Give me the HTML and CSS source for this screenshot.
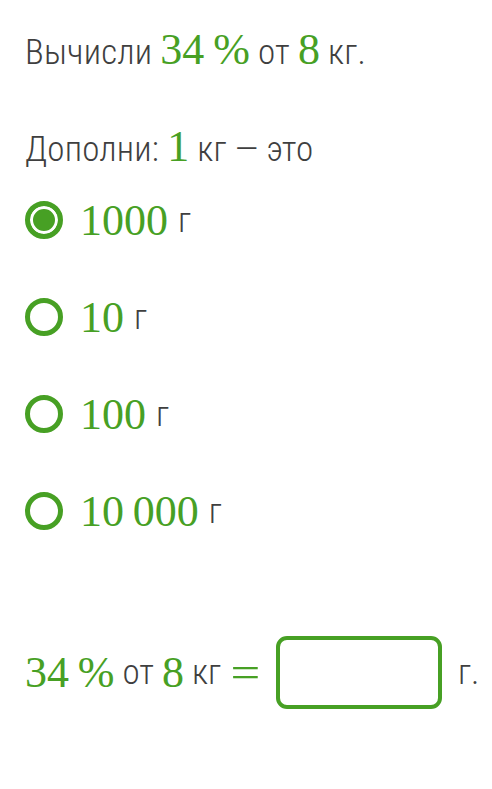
FILE: index.html
```html
<!DOCTYPE html>
<html lang="ru">
<head>
<meta charset="utf-8">
<link rel="stylesheet" href="styles.css">
</head>
<body>
<div class="page">
  <p class="line first">Вычисли <span class="m">34&#8201;%</span> от <span class="m">8</span> кг.</p>
  <p class="line second">Дополни: <span class="m">1</span> кг — это</p>
  <ul class="options">
    <li class="opt"><span class="radio checked"></span><span class="m">1000</span> г</li>
    <li class="opt"><span class="radio"></span><span class="m">10</span> г</li>
    <li class="opt"><span class="radio"></span><span class="m">100</span> г</li>
    <li class="opt"><span class="radio"></span><span class="m">10&#8201;000</span> г</li>
  </ul>
  <div class="answer">
    <span class="m">34&#8201;%</span> от <span class="m">8</span> кг <span class="m eq">=</span>
    <span class="box"></span>
    <span class="unit">г.</span>
  </div>
</div>
</body>
</html>
```
FILE: styles.css
```css
body {
  margin: 0;
  background: #fff;
  font-family: Roboto, "Noto Sans", sans-serif;
  font-weight: 300;
  font-stretch: 75%;
  color: #3f3f3f;
}
.page {
  padding: 0 0 0 25px;
}
.line {
  margin: 0;
  font-size: 35px;
  line-height: 40px;
  letter-spacing: 0.2px;
}
.first {
  padding-top: 30px;
}
.second {
  padding-top: 54px;
}
.m {
  font-family: "Liberation Serif", "DejaVu Serif", serif;
  font-weight: 400;
  font-stretch: 100%;
  letter-spacing: 0;
  color: #47a024;
  font-size: 44px;
}
.options {
  list-style: none;
  margin: 0;
  padding: 0;
  padding-top: 31px;
}
.opt {
  display: flex;
  align-items: center;
  height: 38px;
  margin-bottom: 59px;
  font-size: 35px;
}
.opt .m {
  margin-right: 10px;
}
.radio {
  box-sizing: border-box;
  width: 38px;
  height: 38px;
  border: 5px solid #47a024;
  border-radius: 50%;
  margin-right: 17px;
  flex: none;
}
.radio.checked {
  background: #47a024;
  box-shadow: inset 0 0 0 3px #fff;
}
.answer {
  display: flex;
  align-items: center;
  gap: 8px;
  margin-top: 106px;
  font-size: 35px;
}
.eq {
  margin-left: 4px;
  transform: scaleX(1.2);
}
.box {
  box-sizing: border-box;
  width: 166px;
  height: 73px;
  border: 4px solid #47a024;
  border-radius: 11px;
  margin: 0 8px 0 10px;
}
```
